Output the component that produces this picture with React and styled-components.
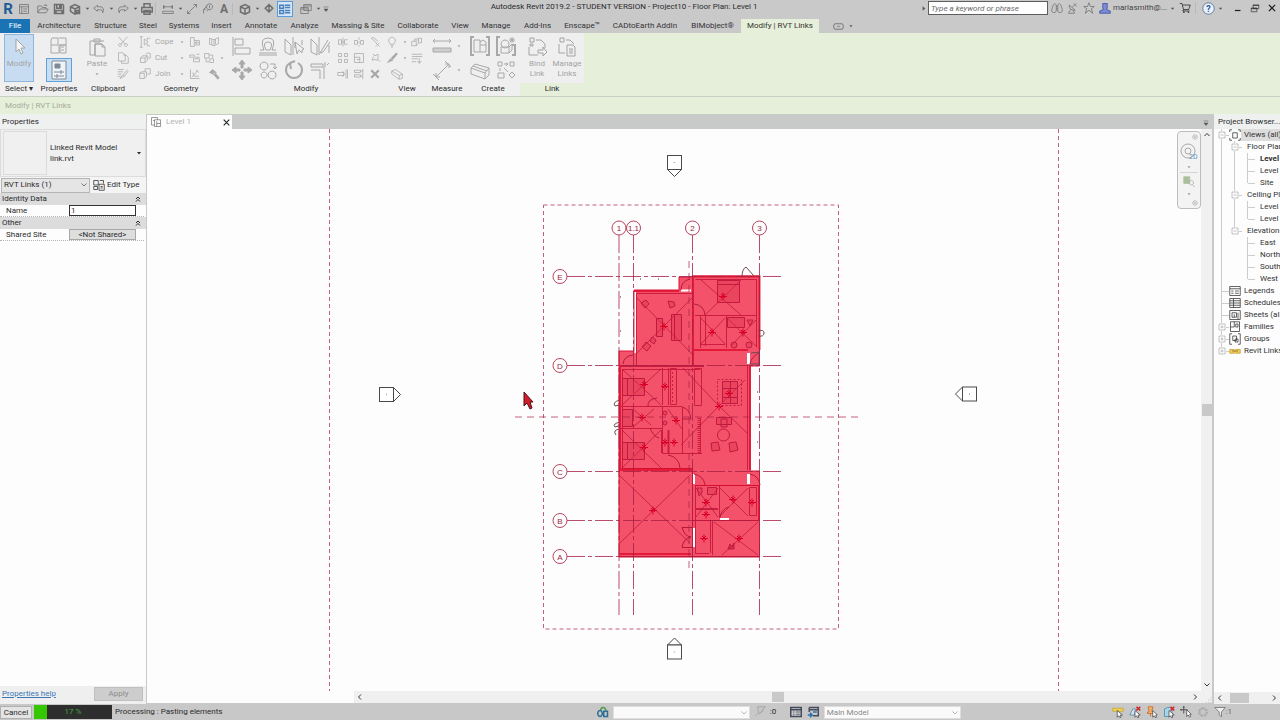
import React from "react";
import styled, { createGlobalStyle, css } from "styled-components";

const GlobalStyle = createGlobalStyle`
  * {
    box-sizing: border-box;
  }
  body {
    margin: 0;
    overflow: hidden;
  }
  body, button, input, select {
    font-family: Roboto, "Open Sans", sans-serif;
    font-size: 8px;
    line-height: 12px;
    color: #2b2b2b;
  }
  button {
    padding: 0;
    border: 0;
    background: none;
  }
  svg {
    display: block;
  }
`;

const WindowStyled = styled.div`
  display: flex;
  flex-direction: column;
  height: 100vh;
  background-color: #c9c9ca;
`;

const IconStyled = styled.svg`
  flex: none;
  width: ${(props) => props.$size}px;
  height: ${(props) => props.$size}px;
  fill: none;
  stroke: currentColor;
  stroke-width: ${(props) => props.$weight || 1};
`;

/* ---------- title bar ---------- */

const TitleBarStyled = styled.header`
  display: flex;
  flex: 0 0 19px;
  align-items: flex-start;
`;

const QuickAccessStyled = styled.div`
  display: flex;
  flex: 0 0 332px;
  align-items: center;
  height: 17px;
`;

const QuickButtonStyled = styled.button`
  display: flex;
  flex: 0 0 16px;
  align-items: center;
  justify-content: center;
  height: 16px;
  color: #6e6e6e;
  ${(props) =>
    props.$active &&
    css`
      background-color: #d4e7fa;
      box-shadow: inset 0 0 0 1px #5a9bd8;
      color: #4a7fb8;
    `}
`;

const LetterStyled = styled.span`
  font-weight: 700;
  font-size: ${(props) => (props.$logo ? 15 : 12)}px;
  line-height: 16px;
  color: ${(props) => (props.$logo ? "#1d5c96" : "#6e6e6e")};
`;

const ArrowButtonStyled = styled.button`
  display: flex;
  flex: 0 0 8px;
  align-items: center;
  justify-content: center;
  height: 12px;
  color: #555;
`;

const SeparatorStyled = styled.span`
  flex: 0 0 ${(props) => props.$width || 5}px;
  height: 12px;
  border-left: 1px solid ${(props) => (props.$blank ? "transparent" : "#b8b8b8")};
`;

const WindowTitleStyled = styled.div`
  flex: 1;
  overflow: hidden;
  line-height: 13px;
  text-align: center;
  white-space: nowrap;
`;

const AccountAreaStyled = styled.div`
  display: flex;
  flex: 0 0 362px;
  align-items: center;
  height: 16px;
`;

const SearchInputStyled = styled.input`
  flex: 0 0 120px;
  height: 14px;
  margin: 0 1px;
  padding: 0 2px;
  border: 1px solid #5d5d5d;
  background-color: #fff;
  font-style: italic;
  &::placeholder {
    color: #6a6a6a;
    opacity: 1;
  }
`;

const UserNameStyled = styled.span`
  flex: 0 0 55px;
  color: #444;
`;

const WindowButtonStyled = styled(QuickButtonStyled)`
  flex-basis: 17px;
  color: #222;
`;

/* ---------- ribbon ---------- */

const TabRowStyled = styled.nav`
  display: flex;
  flex: 0 0 14px;
`;

const RibbonTabStyled = styled.button`
  flex: 0 0 ${(props) => props.$width}px;
  height: 14px;
  white-space: nowrap;
  background-color: ${(props) => {
    switch (props.$kind) {
      case "file":
        return "#1973b5";
      case "active":
        return "#e6efd9";
      default:
        return "transparent";
    }
  }};
  color: ${(props) => (props.$kind === "file" ? "#fff" : "#333")};
`;

const RibbonToggleStyled = styled.button`
  display: flex;
  align-items: center;
  gap: 4px;
  margin-left: 14px;
  color: #555;
`;

const RibbonStyled = styled.div`
  display: flex;
  flex: 0 0 64px;
  background-color: #e6efd9;
  border-bottom: 1px solid #c9cfc2;
`;

const PanelStyled = styled.section`
  display: flex;
  flex: 0 0 ${(props) => props.$width}px;
  flex-direction: column;
  background-color: ${(props) => (props.$green ? "transparent" : "#efefef")};
`;

const PanelBodyStyled = styled.div`
  display: flex;
  flex: 0 0 50px;
  gap: ${(props) => props.$gap || 0}px;
  justify-content: center;
  padding-top: 1px;
  background-color: #efefef;
  color: #a3a3a3;
`;

const PanelLabelStyled = styled.div`
  line-height: 12px;
  text-align: center;
  white-space: nowrap;
`;

const BigButtonStyled = styled.button`
  display: flex;
  flex: 0 0 ${(props) => props.$width || 30}px;
  flex-direction: column;
  align-items: center;
  gap: 2px;
  height: 48px;
  padding-top: 3px;
  line-height: 10px;
  color: #a3a3a3;
  ${(props) =>
    props.$active &&
    css`
      background-color: #c7dcf1;
      box-shadow: inset 0 0 0 1px #8fb6dd;
    `}
`;

const BigGridStyled = styled.div`
  display: grid;
  grid-template-columns: repeat(${(props) => props.$columns}, 26px);
  grid-template-rows: 24px 24px;
`;

const SmallGridStyled = styled.div`
  display: grid;
  grid-template-columns: repeat(${(props) => props.$columns}, ${(props) => props.$cell || 16}px);
  grid-template-rows: repeat(3, 16px);
`;

const ToolStyled = styled.button`
  display: flex;
  align-items: center;
  justify-content: center;
  gap: 4px;
  color: #a8a8a8;
  ${(props) =>
    props.$active &&
    css`
      background-color: #c7dff5;
      box-shadow: inset 0 0 0 1px #62a0d8;
      color: #7e8a96;
    `}
`;

const CommandStyled = styled(ToolStyled)`
  justify-content: flex-start;
`;

const CommandNameStyled = styled.span`
  flex: 0 0 20px;
  text-align: left;
`;

const OptionsBarStyled = styled.div`
  flex: 0 0 17px;
  padding-left: 5px;
  background-color: #e6efd9;
  line-height: 17px;
  color: #a5aa9e;
`;

/* ---------- workspace ---------- */

const WorkspaceStyled = styled.main`
  display: grid;
  flex: 1;
  grid-template-columns: 146px minmax(0, 1fr) 66px;
  min-height: 0;
  background-color: #c8caca;
`;

const PaletteStyled = styled.aside`
  display: flex;
  flex-direction: column;
  min-width: 0;
  overflow: hidden;
  background-color: #fdfdfd;
`;

const PaletteTitleStyled = styled.h2`
  flex: 0 0 15px;
  margin: 0;
  padding: 1px 0 0 ${(props) => props.$inset || 2}px;
  background-color: #eff0f0;
  font-weight: 400;
  font-size: 8px;
  line-height: 14px;
  white-space: nowrap;
`;

const TypeSelectorStyled = styled.button`
  display: flex;
  flex: 0 0 48px;
  align-items: center;
  gap: 3px;
  padding: 0 2px;
  border: 1px solid #dcdcdc;
  background-color: #f0f0f0;
  line-height: 11px;
  text-align: left;
`;

const ThumbnailStyled = styled.span`
  flex: 0 0 44px;
  height: 44px;
  border: 1px solid #dcdcdc;
`;

const TypeNameStyled = styled.span`
  flex: 1;
`;

const FilterRowStyled = styled.div`
  display: flex;
  flex: 0 0 16px;
  align-items: center;
  gap: 3px;
  padding-left: 1px;
  background-color: #f4f4f4;
`;

const ComboStyled = styled.label`
  position: relative;
  flex: 0 0 ${(props) => props.$width}px;
  height: ${(props) => props.$height}px;
  color: #777;
  > svg {
    position: absolute;
    top: 3px;
    right: 2px;
    pointer-events: none;
  }
`;

const SelectStyled = styled.select`
  width: 100%;
  height: 100%;
  padding: 0 2px;
  appearance: none;
  border: 1px solid ${(props) => (props.$plain ? "#dedede" : "#b5b5b5")};
  border-radius: 0;
  background-color: ${(props) => (props.$plain ? "#fafafa" : "#e5e5e5")};
  color: ${(props) => (props.$plain ? "#8a8a8a" : "#2b2b2b")};
`;

const EditTypeStyled = styled.button`
  display: flex;
  align-items: center;
  gap: 2px;
  white-space: nowrap;
`;

const CategoryStyled = styled.div`
  display: flex;
  flex: 0 0 12px;
  align-items: center;
  justify-content: space-between;
  padding: 0 4px 0 2px;
  background-color: #dcdcdd;
`;

const PropertyRowStyled = styled.div`
  display: grid;
  flex: 0 0 12px;
  grid-template-columns: 63px 67px 1fr;
  align-items: center;
  margin-right: 2px;
  padding-left: 6px;
  border-bottom: 1px dotted #b5b5b5;
  line-height: 11px;
`;

const NameInputStyled = styled.input`
  width: 100%;
  height: 11px;
  padding: 0 1px;
  border: 1px solid #333;
  background-color: #fff;
  line-height: 9px;
`;

const SharedButtonStyled = styled.button`
  height: 11px;
  border: 1px solid #a8a8a8;
  background-color: #dedede;
  line-height: 9px;
`;

const PaletteFooterStyled = styled.div`
  display: flex;
  align-items: center;
  justify-content: space-between;
  height: 18px;
  margin-top: auto;
  padding: 0 3px 2px 2px;
  background-color: #efefef;
`;

const HelpLinkStyled = styled.a`
  color: #3a78b5;
`;

const ApplyButtonStyled = styled.button`
  width: 49px;
  height: 14px;
  border: 1px solid #c0c0c0;
  background-color: #cdcdcd;
  color: #8c8c8c;
`;

const DocumentStyled = styled.section`
  display: flex;
  flex-direction: column;
  min-width: 0;
  margin: 0 2px 0 1px;
`;

const DocTabRowStyled = styled.div`
  display: flex;
  flex: 0 0 15px;
  align-items: flex-end;
  justify-content: space-between;
  padding-right: 2px;
`;

const DocTabStyled = styled.div`
  display: flex;
  align-items: center;
  gap: 4px;
  width: 85px;
  height: 14px;
  padding-left: 3px;
  background-color: #fdfdfd;
  color: #7a7a7a;
`;

const DocNameStyled = styled.span`
  flex: 1;
  color: #b2b2b2;
`;

const CloseViewStyled = styled.button`
  display: flex;
  flex: 0 0 12px;
  align-items: center;
  justify-content: center;
  color: #222;
`;

const DocBodyStyled = styled.div`
  display: grid;
  flex: 1;
  grid-template-columns: minmax(0, 1fr) 11px;
  grid-template-rows: minmax(0, 1fr) 12px;
  min-height: 0;
  margin-bottom: 1px;
  background-color: #fdfdfd;
`;

const CanvasStyled = styled.div`
  position: relative;
  min-width: 0;
  min-height: 0;
  > svg {
    width: 100%;
    height: 100%;
  }
`;

const NavBarStyled = styled.div`
  position: absolute;
  top: 2px;
  right: 0;
  display: flex;
  flex-direction: column;
  align-items: center;
  justify-content: space-between;
  width: 24px;
  height: 78px;
  padding: 2px;
  border: 1px solid #bdbdbd;
  border-radius: 4px;
  background-color: #f3f3f3;
  color: #999;
`;

const NavCornerStyled = styled.button`
  display: flex;
  align-self: flex-end;
  color: #aaa;
`;

const NavRuleStyled = styled.span`
  width: 18px;
  height: 1px;
  background-color: #d5d5d5;
`;

const ScrollBarStyled = styled.div`
  display: flex;
  flex: 0 0 12px;
  flex-direction: ${(props) => (props.$vertical ? "column" : "row")};
  align-items: center;
  justify-content: space-between;
  padding: ${(props) => (props.$vertical ? "2px 0" : "0 2px")};
  background-color: #f0f0f0;
  color: #333;
`;

const ScrollThumbStyled = styled.span`
  flex: none;
  width: ${(props) => (props.$vertical ? 10 : props.$length)}px;
  height: ${(props) => (props.$vertical ? props.$length : 10)}px;
  background-color: #c9c9c9;
`;

const HorizontalAreaStyled = styled.div`
  display: flex;
  > div {
    flex: 1;
    margin-left: 207px;
  }
`;

const GripStyled = styled.span`
  display: flex;
  align-items: flex-end;
  justify-content: flex-end;
  background-color: #f0f0f0;
  color: #aaa;
`;

/* ---------- project browser ---------- */

const TreeStyled = styled.ul`
  flex: 1;
  margin: 0;
  padding: 0 0 0 2px;
  list-style: none;
`;

const TreeRowStyled = styled.li`
  display: flex;
  align-items: center;
  height: 12px;
  white-space: nowrap;
  color: #333;
`;

const GuideStyled = styled.span`
  display: flex;
  flex: 0 0 13px;
  align-items: center;
  height: 12px;
  padding-left: 2px;
  background-image: ${(props) =>
    props.$kind === "blank"
      ? "none"
      : props.$kind === "line"
        ? "linear-gradient(#ccc, #ccc)"
        : "linear-gradient(#ccc, #ccc), linear-gradient(#ccc, #ccc)"};
  background-position: 5px 0, 6px 6px;
  background-repeat: no-repeat;
  background-size: 1px ${(props) => (props.$last ? "6px" : "12px")}, 7px 1px;
  > svg {
    background-color: #fdfdfd;
    color: #8a8a8a;
  }
`;

const TreeLabelStyled = styled.span`
  padding: 0 2px 0 ${(props) => (props.$nested ? 5 : 3)}px;
  font-weight: ${(props) => (props.$bold ? 700 : 400)};
  background-color: ${(props) => (props.$selected ? "#dcdcdd" : "transparent")};
`;

/* ---------- status bar ---------- */

const StatusBarStyled = styled.footer`
  display: flex;
  flex: 0 0 16px;
  align-items: center;
  background-color: #c8c8c8;
  white-space: nowrap;
`;

const StatusLeftStyled = styled.div`
  display: flex;
  flex: 0 0 46%;
  align-items: center;
  gap: 2px;
`;

const CancelButtonStyled = styled.button`
  width: 32px;
  height: 13px;
  border: 1px solid #b0b0b0;
  background-color: #e4e4e4;
`;

const ProgressStyled = styled.div`
  position: relative;
  width: 78px;
  height: 14px;
  margin-right: 1px;
  background-color: #2e2e2e;
`;

const ProgressFillStyled = styled.div`
  height: 14px;
  background-color: #35c800;
`;

const ProgressTextStyled = styled.span`
  position: absolute;
  inset: 1px 0 0 0;
  text-align: center;
  color: #3fa83f;
`;

const StatusGroupStyled = styled.div`
  display: flex;
  align-items: center;
  gap: ${(props) => props.$gap}px;
  margin-left: ${(props) => (props.$right ? "auto" : "8px")};
  padding-right: ${(props) => (props.$right ? 48 : 0)}px;
`;

const CountStyled = styled.span`
  flex: 0 0 12px;
`;

const StatusButtonStyled = styled.button`
  display: flex;
  align-items: center;
  color: ${(props) => props.$color || "#666"};
`;

/* Drawn on a 16 unit grid unless a tool asks for another size. */
const ICONS = {
  down: <path d="M4 6h8l-4 5z" fill="currentColor" stroke="none" />,
  right: <path d="M6 3l6 5-6 5z" fill="currentColor" stroke="none" />,
  chevronDown: <path d="M3 5l5 5 5-5" />,
  chevronUp: <path d="M3 10l5-5 5 5" />,
  chevronLeft: <path d="M10 3L5 8l5 5" />,
  chevronRight: <path d="M6 3l5 5-5 5" />,
  customize: <path d="M3 4h10M4 8h8l-4 5z" fill="currentColor" />,
  doubleUp: <path d="M4 8l4-4 4 4M4 13l4-4 4 4" />,
  window: <path d="M2 2h12v12H2zM2 5h12M5 5v9M7 8h5M7 11h5" />,
  open: <path d="M1 13V4h5l1 2h5v2M1 13l3-5h11l-3 5zM9 3h4l-1-1M13 3l-1 1" />,
  save: <path d="M2 2h11l1 1v11H2zM5 2v5h6V2M4 14v-4h8v4M9 3v3" strokeWidth="2" />,
  cloudSave: <path d="M2 5l6-3 6 3v6l-6 4-6-4zM2 5l6 3 6-3M8 8v7M10 10h4v4h-4z" strokeWidth="2" />,
  undo: <path d="M6 3L1 7l5 4V9h4q3 0 3 4 3-8-4-8H6z" />,
  redo: <path d="M10 3l5 4-5 4V9H6q-3 0-3 4-3-8 4-8h3z" />,
  print: <path d="M4 6V1h8v5M4 12H1V6h14v6h-3M4 10h8v5H4zM5 12h6" strokeWidth="2" />,
  measure: <path d="M2 3v5M14 3v5M2 5h12M4 4L2 5l2 2M12 4l2 1-2 2M1 11h14v3H1z" />,
  dimension: <path d="M2 14L14 2M10 2h4v4M2 10v4h4" />,
  tag: <path d="M2 14V9l5-6M2 9l3-1M10 1a4 4 0 1 0 .1 0M10 3v4M6 11l3-3" />,
  cube: <path d="M2 5l6-3 6 3v7l-6 3-6-3zM2 5l6 3 6-3M8 8v7" strokeWidth="2" />,
  section: <path d="M8 2l5 5-5 5-5-5zM8 2v10" strokeWidth="2" />,
  thinLines: <path d="M1 3h5v4H1zM8 3h7M8 6h7M1 10h5v4H1zM8 10h7M8 13h7" strokeWidth="2" />,
  windows: <path d="M5 2h10v8H5zM5 4h10M1 6h10v8H1zM1 8h10" />,
  binoculars: <path d="M3 4l2-2 2 2v8a3 3 0 1 1-6-2zM13 4l-2-2-2 2v8a3 3 0 1 0 6-2zM7 6h2M7 9h2" />,
  satellite: <path d="M3 4q-1 7 8 7zM7 7l5-5M9 2l4 4M5 10l-3 5h8l-2-4" />,
  star: <path d="M8 1l2 5h5l-4 3 2 6-5-4-5 4 2-6-4-3h5z" />,
  user: <path d="M5 2h6v6l-1 2 5 2v3H1v-3l5-2-1-2z" fill="#7b8bd6" stroke="#34489e" />,
  cart: <path d="M1 2h3l2 8h7l2-6H5M6 10l-1 2h9M6 13h1v1H6zM12 13h1v1h-1z" />,
  minimize: <path d="M3 12h9" strokeWidth="2" />,
  restore: <path d="M5 3h9v6H5zM5 4h9M2 8h9v6H2zM2 9h9" />,
  close: <path d="M3 3l10 10M13 3L3 13" strokeWidth="2" />,
  toggle: <path d="M3 4h10q2 0 2 4t-2 4H3q-2 0-2-4t2-4M6 9l2-2 2 2" />,
  cursor: <path d="M7 2v13l3-3 2 5 2-1-2-5h4z" fill="#f5f5f5" />,
  families: <path d="M3 2h6v7H2V4zM10 2h7v7h-6M2 9v8h8V9M10 9h7v8h-6V9M12 11h3M12 14h3" />,
  propertySheet: (
    <>
      <path d="M3 1h14v18H3zM5 12h10M12 10v4M5 16h10M8 14v4" fill="#eef3f8" />
      <path d="M6 4h5v4H6z" fill="currentColor" />
    </>
  ),
  paste: <path d="M3 4h14M3 4v14h5V7h7M7 4V2h6v3H7zM8 7h7l3 3v9H8zM15 7v3h3" />,
  scissors: <path d="M2 1l9 10M14 1L5 11M4 10a2 2 0 1 0 .1 0M12 10a2 2 0 1 0 .1 0" />,
  copy: <path d="M2 1h6l3 3v8H2zM8 4h4l3 3v8H6v-3" />,
  matchBrush: <path d="M1 2h8M1 5h7M1 8h5M1 11h4M14 2L8 9l2 2 5-7M8 9l-4 5 6-3" />,
  cope: <path d="M3 1v14M1 1h4M1 15h4M7 4l5 4-5 4zM15 3h-4v3M15 13h-4v-3" />,
  cutGeo: <path d="M2 8l3-3h6v6l-3 3H2zM2 8h6v6M8 8l3-3M9 3q2-3 6-1v6h-3" />,
  joinGeo: <path d="M1 7l3-2h6v6l-3 3H1zM1 7h6v7M8 5V1h7v7h-4" />,
  wallOpen: <path d="M2 2h5v12H2zM7 6h7v6H7M9 9h5M11 7l-3 2 3 2" />,
  wallSplit: <path d="M1 4h6v3H1zM6 9h8v4H6zM10 3h4M8 7h6" />,
  unjoin: <path d="M2 2v12h12M4 12l8-9M5 6l2 5h6M9 3l4 3" />,
  mesh: <path d="M2 3l6 2v8l-6-2zM8 5l6-3v8l-6 3M5 4v8M10 4v7" />,
  paint: <path d="M2 2h6v6H2zM9 9h5v5H9zM4 8v5h4M8 4h5v4" />,
  hammer: <path d="M2 6l4-4 5 4-3 3zM7 8l6 7 2-2-6-7" fill="currentColor" />,
  align: <path d="M1 1v19M3 3h8v6H3zM3 12h15v6H3z" />,
  offset: <path d="M1 17h18M2 14h4q-5-12 4-12t4 12h4M8 14q-4-8 2-8t2 8zM1 19h18" />,
  mirrorPick: <path d="M1 3v13l6 3V9zM9 1v18M18 4v5M11 6l2 12 2-4 3 3v-3l2-1zM11 6v6" />,
  mirrorDraw: <path d="M1 3v13l6 3V9zM9 1v18M18 4l-8 13 3-1 7-10M19 9v8" />,
  move: <path d="M10 0l3 4h-2v4h-2V4H7zM10 20l3-4h-2v-4h-2v4H7zM0 10l4-3v2h4v2H4v2zM20 10l-4-3v2h-4v2h4v2z" fill="currentColor" />,
  copyTool: <path d="M6 2a4 4 0 1 0 .1 0M14 11a4 4 0 1 0 .1 0M6 12a3 3 0 1 0 .1 0M12 4h5v5M15 7l2 2 2-2" />,
  rotate: <path d="M6 3a8 8 0 1 0 8 0M6 3l5-2M6 3l1 6" strokeWidth="2" />,
  trim: <path d="M1 4h12v3H1zM10 10v9M14 7v12M15 2v5M17 5l2-2M10 10H1" />,
  splitA: <path d="M2 5h4v6H2zM14 5h-4v6h4M8 2v12M6 8h4" />,
  splitB: <path d="M2 6h4v5H2zM10 6h4v5h-4zM8 2v3M8 7v3M8 12v2" />,
  unpin: <path d="M3 3l7 6M3 3l3-1 6 5M9 9l5 5M14 9l-5 5" />,
  array: <path d="M2 2h4v4H2zM10 2h4v4h-4zM2 10h4v4H2zM10 10h4v4h-4z" />,
  scale: <path d="M2 2h12v12H2zM2 7h7v7M5 10h4" />,
  pin: <path d="M5 3l3 2 4-2v7l3 3M4 11l2-5M4 11l4-1 4 1" />,
  extendA: <path d="M1 6h8v4H1zM12 2v12M14 2v12M7 4l3 4-3 4" />,
  extendB: <path d="M2 3h8v3H2zM2 9h8v3H2zM13 1v14M10 4h3M10 11h3" />,
  remove: <path d="M3 3l10 10M13 3L3 13" strokeWidth="3" />,
  bulb: <path d="M6 11q-4-4-2-7 4-5 8 0 2 3-2 7zM6 13h4M7 15h2" />,
  brush: <path d="M14 1L7 8l2 2 6-7zM6 9l-4 5 7-3z" fill="currentColor" />,
  solid: <path d="M1 4l5-2 9 6v6l-4 1-10-7zM1 4l10 6v5M11 10l4-2" />,
  cubes: <path d="M1 7h6v6H1zM7 7l3-3v6l-3 3M8 3h6v6h-3M5 7V4h3" />,
  lineWork: <path d="M1 3h14M1 6h14M1 9h8M1 13h6M11 8v7M9 12l2 3 3-3" />,
  ruler: (
    <>
      <path d="M1 5h18M3 3L1 5l2 2M17 3l2 2-2 2" />
      <path d="M1 12h18v4H1z" fill="#cfcfcf" />
    </>
  ),
  slant: <path d="M4 17L17 4M13 4h4v4M4 13v4h4M1 14l6 6M13 1l6 6" />,
  group: (
    <>
      <path d="M4 1H1v18h3M16 1h3v18h-3" strokeWidth="2" />
      <path d="M4 4h6v12H4zM10 9h6v7h-6M10 6l3-2 3 2v3" />
    </>
  ),
  part: (
    <>
      <path d="M4 1H1v18h3M16 9h3v10h-3" strokeWidth="2" />
      <path d="M5 11h8v6H5zM9 4a4 4 0 1 0 .1 0M13 11l3-3v6l-3 3M16 1v6M13 4h6M14 2l4 4M18 2l-4 4" />
    </>
  ),
  assembly: <path d="M1 8L5 4l14 4v7l-4 4L1 14zM1 8l14 5v6M15 13l4-5M3 6l14 5" />,
  similar: <path d="M2 2h4v4H2zM14 2h4v4h-4zM2 13h6v5H2zM16 12l3 3-3 3-3-3zM8 4h4M4 8v3M8 8l4 4M10 3l2 1-2 2" />,
  bind: <path d="M3 1h4v4H3zM3 7h3v2H3zM2 10v8h9M9 3h5l4 4v4M11 13h5v-3l4 5-4 4v-3h-5z" />,
  manage: <path d="M3 1h4v4H3zM2 7v9h6M9 3h4l4 4M10 8h6l2 2v9h-8zM12 12h4M12 14h4M12 16h4" />,
  editType: <path d="M1 2h6v6H1zM9 2h5v4M1 10h5v4H1zM8 7h7v8H8zM10 10h3M10 12h3" />,
  sheetView: <path d="M2 2h8v3M2 2v10h4M6 5h8v9H6zM9 7v7M9 10h5M4 6h2" />,
  wheel: <path d="M7 1a6 6 0 1 0 .1 0M7 4a3 3 0 1 0 .1 0" />,
  zoomRegion: (
    <>
      <path d="M1 1h8v9H1z" fill="#a9bf9c" stroke="#a9bf9c" />
      <path d="M11 6a3 3 0 1 0 .1 0M13 12l3 3" />
    </>
  ),
  circleX: <path d="M8 2a6 6 0 1 0 .1 0M6 6l4 4M10 6l-4 4" />,
  minusBox: <path d="M2 2h12v12H2zM5 8h6" />,
  plusBox: <path d="M2 2h12v12H2zM5 8h6M8 5v6" />,
  views: <path d="M4 1H1v3M12 1h3v3M4 15H1v-3M12 15h3v-3M5 5h6v7H5z" />,
  legends: <path d="M1 2h14v12H1zM1 5h14M3 8h3M8 8h5M3 11h3M8 11h5" />,
  schedules: <path d="M1 2h14v12H1zM1 5h14M1 8h14M1 11h14M6 2v12" />,
  sheets: <path d="M1 2h14v12H1zM4 5h6v6H4zM12 5v9M7 7v4" />,
  familyTree: <path d="M2 1h12v13H2zM2 8h5M7 1v7M9 4h3v4H9z" />,
  groups: <path d="M4 1H1v14h3M12 1h3v14h-3M5 4h5v6H5zM8 8h4v4H8z" />,
  linkChain: (
    <>
      <path d="M1 6h6v5H1zM9 6h6v5H9z" fill="#f1cf5c" stroke="#c79a20" />
      <path d="M4 8h8" stroke="#8c6d18" />
    </>
  ),
  workset: (
    <>
      <path d="M5 6q0-4 3-4t4 4" stroke="#4f9a4f" strokeWidth="2" />
      <path d="M4 6a3 4 0 1 0 .1 0M9 7v7h5V7z" stroke="#2b6e94" strokeWidth="2" />
    </>
  ),
  editRequests: <path d="M5 1h10l-3 3-3 5-3 1zM2 13l3-3M9 9l4-4" />,
  options: (
    <>
      <path d="M1 2h14v12H1zM1 5h14" strokeWidth="2" />
      <path d="M4 8h2M8 8h5M4 11h2M8 11h5" />
    </>
  ),
  addOption: (
    <>
      <path d="M3 2h12v11H8M3 2v6M3 5h12" strokeWidth="2" />
      <path d="M8 8h5M1 12h6M4 9l3 3-3 3" stroke="#2b6fa8" strokeWidth="2" />
    </>
  ),
  selectLinks: (
    <>
      <path d="M1 3h14v4H1z" fill="#f0d25a" stroke="#c6a22a" />
      <path d="M7 6v9l2-2 2 3 1-1-1-3h3z" fill="#fff" stroke="#444" />
    </>
  ),
  selectUnderlay: (
    <>
      <path d="M1 12l4-8h5l-3 8z" fill="#cfe3ee" stroke="#4a86a8" />
      <path d="M10 1l5 5M15 1l-5 5" stroke="#d02525" strokeWidth="2" />
      <path d="M8 6v9l2-2 2 3 1-1-1-3h3z" fill="#fff" stroke="#444" />
    </>
  ),
  selectPinned: (
    <>
      <path d="M3 1h6v3H8v4h2v2H2V8h2V4H3zM6 10v4" fill="#f3b56a" stroke="#c85f22" />
      <path d="M9 6v9l2-2 2 3 1-1-1-3h2z" fill="#fff" stroke="#444" />
    </>
  ),
  selectFace: (
    <>
      <path d="M2 4l4-2h6v9l-3 3H2z" fill="#a9d4e8" stroke="#3d86ac" />
      <path d="M10 1l5 5M15 1l-5 5" stroke="#d02525" strokeWidth="2" />
      <path d="M8 6v9l2-2 2 3 1-1-1-3h3z" fill="#fff" stroke="#444" />
    </>
  ),
  dragSelect: (
    <>
      <path d="M5 0v10M0 5h10M4 2l1-1 1 1M2 4L1 5l1 1" stroke="#333" />
      <path d="M9 5v9l2-2 2 3 1-1-1-3h2z" fill="#fff" stroke="#444" />
    </>
  ),
  progress: <path d="M8 3a5 5 0 1 0 .1 0" strokeWidth="3" strokeDasharray="3 1" stroke="#aaa" />,
  filter: <path d="M1 2h14l-5 6v6l-3-2V8z" fill="#eee" />,
  grip: <path d="M14 6v1M14 10v1M10 10v1M14 14v1M10 14v1M6 14v1" strokeWidth="2" />,
};

function Icon({ name, size = 12, grid = 16, weight }) {
  return (
    <IconStyled $size={size} $weight={weight} viewBox={`0 0 ${grid} ${grid}`} aria-hidden="true">
      {ICONS[name]}
    </IconStyled>
  );
}

function QuickButton({ icon, label, active, children }) {
  return (
    <QuickButtonStyled $active={active} aria-label={label}>
      {children || <Icon name={icon} size={12} />}
    </QuickButtonStyled>
  );
}

function MenuArrow({ label }) {
  return (
    <ArrowButtonStyled aria-label={label}>
      <Icon name="down" size={7} />
    </ArrowButtonStyled>
  );
}

function TitleBar() {
  return (
    <TitleBarStyled>
      <QuickAccessStyled>
        <QuickButton label="Revit">
          <LetterStyled $logo>R</LetterStyled>
        </QuickButton>
        <QuickButton icon="window" label="Home" />
        <SeparatorStyled $blank $width={3} />
        <QuickButton icon="open" label="Open" />
        <QuickButton icon="save" label="Save" />
        <QuickButton icon="cloudSave" label="Synchronize" />
        <MenuArrow label="Synchronize options" />
        <QuickButton icon="undo" label="Undo" />
        <MenuArrow label="Undo list" />
        <QuickButton icon="redo" label="Redo" />
        <MenuArrow label="Redo list" />
        <QuickButton icon="print" label="Print" />
        <SeparatorStyled />
        <QuickButton icon="measure" label="Measure" />
        <MenuArrow label="Measure options" />
        <QuickButton icon="dimension" label="Aligned dimension" />
        <QuickButton icon="tag" label="Tag by category" />
        <QuickButton label="Text">
          <LetterStyled>A</LetterStyled>
        </QuickButton>
        <SeparatorStyled />
        <QuickButton icon="cube" label="Default 3D view" />
        <MenuArrow label="3D view options" />
        <QuickButton icon="section" label="Section" />
        <QuickButton icon="thinLines" label="Thin lines" active />
        <SeparatorStyled $blank />
        <QuickButton icon="windows" label="Switch windows" />
        <MenuArrow label="Window list" />
        <ArrowButtonStyled aria-label="Customize toolbar">
          <Icon name="customize" size={8} />
        </ArrowButtonStyled>
      </QuickAccessStyled>
      <WindowTitleStyled>
        Autodesk Revit 2019.2 - STUDENT VERSION - Project10 - Floor Plan: Level 1
      </WindowTitleStyled>
      <AccountAreaStyled>
        <SeparatorStyled $blank $width={3} />
        <ArrowButtonStyled aria-label="Collapse search">
          <Icon name="right" size={7} />
        </ArrowButtonStyled>
        <SearchInputStyled aria-label="Search" placeholder="Type a keyword or phrase" />
        <QuickButton icon="binoculars" label="Find" />
        <QuickButton icon="satellite" label="Communication center" />
        <QuickButton icon="star" label="Favorites" />
        <QuickButton icon="user" label="Account" />
        <UserNameStyled>marlasmith@...</UserNameStyled>
        <MenuArrow label="Account options" />
        <WindowButtonStyled aria-label="App store">
          <Icon name="cart" size={12} />
        </WindowButtonStyled>
        <SeparatorStyled $blank $width={2} />
        <SeparatorStyled />
        <QuickButton label="Help">
          <IconStyled $size={13} viewBox="0 0 16 16" aria-hidden="true">
            <circle cx="8" cy="8" r="7" fill="#eaf1f8" stroke="#4d6a92" />
            <text x="8" y="12" fontSize="11" fontWeight="700" textAnchor="middle" fill="#2d55a0" stroke="none">
              ?
            </text>
          </IconStyled>
        </QuickButton>
        <MenuArrow label="Help options" />
        <SeparatorStyled $blank />
        <WindowButtonStyled aria-label="Minimize">
          <Icon name="minimize" size={10} />
        </WindowButtonStyled>
        <WindowButtonStyled aria-label="Restore">
          <Icon name="restore" size={10} />
        </WindowButtonStyled>
        <WindowButtonStyled aria-label="Close">
          <Icon name="close" size={10} />
        </WindowButtonStyled>
      </AccountAreaStyled>
    </TitleBarStyled>
  );
}

const tabs = [
  { name: "File", width: 30, kind: "file" },
  { name: "Architecture", width: 58 },
  { name: "Structure", width: 45 },
  { name: "Steel", width: 30 },
  { name: "Systems", width: 42 },
  { name: "Insert", width: 33 },
  { name: "Annotate", width: 46 },
  { name: "Analyze", width: 41 },
  { name: "Massing & Site", width: 66 },
  { name: "Collaborate", width: 54 },
  { name: "View", width: 30 },
  { name: "Manage", width: 42 },
  { name: "Add-Ins", width: 41 },
  { name: "Enscape™", width: 48 },
  { name: "CADtoEarth AddIn", width: 78 },
  { name: "BIMobject®", width: 57 },
  { name: "Modify | RVT Links", width: 78, kind: "active" },
];

function Tool({ icon, label, big, active, arrow }) {
  return (
    <ToolStyled aria-label={label} $active={active}>
      <Icon name={icon} size={big ? 20 : 12} grid={big ? 20 : 16} />
      {arrow && <Icon name="down" size={6} />}
    </ToolStyled>
  );
}

function Command({ icon, name }) {
  return (
    <CommandStyled>
      <Icon name={icon} size={12} />
      <CommandNameStyled>{name}</CommandNameStyled>
      <Icon name="down" size={6} />
    </CommandStyled>
  );
}

function Panel({ label, width, gap, green, children }) {
  return (
    <PanelStyled $width={width} $green={green}>
      <PanelBodyStyled $gap={gap}>{children}</PanelBodyStyled>
      <PanelLabelStyled>{label}</PanelLabelStyled>
    </PanelStyled>
  );
}

function Ribbon() {
  return (
    <>
      <TabRowStyled>
        {tabs.map((tab) => (
          <RibbonTabStyled key={tab.name} $width={tab.width} $kind={tab.kind}>
            {tab.name}
          </RibbonTabStyled>
        ))}
        <RibbonToggleStyled aria-label="Minimize ribbon">
          <Icon name="toggle" size={11} />
          <Icon name="down" size={6} />
        </RibbonToggleStyled>
      </TabRowStyled>
      <RibbonStyled>
        <Panel label="Select ▾" width={38}>
          <BigButtonStyled $active>
            <Icon name="cursor" size={20} grid={20} />
            Modify
          </BigButtonStyled>
        </Panel>
        <Panel label="Properties" width={42}>
          <BigGridStyled $columns={1}>
            <Tool big icon="families" label="Type properties" />
            <Tool big icon="propertySheet" label="Properties" active />
          </BigGridStyled>
        </Panel>
        <Panel label="Clipboard" width={56} gap={6}>
          <BigButtonStyled $width={24}>
            <Icon name="paste" size={20} grid={20} />
            Paste
            <Icon name="down" size={6} />
          </BigButtonStyled>
          <SmallGridStyled $columns={1}>
            <Tool icon="scissors" label="Cut to clipboard" />
            <Tool icon="copy" label="Copy to clipboard" />
            <Tool icon="matchBrush" label="Match type" />
          </SmallGridStyled>
        </Panel>
        <Panel label="Geometry" width={90}>
          <SmallGridStyled $columns={1} $cell={46}>
            <Command icon="cope" name="Cope" />
            <Command icon="cutGeo" name="Cut" />
            <Command icon="joinGeo" name="Join" />
          </SmallGridStyled>
          <SmallGridStyled $columns={2} $cell={19}>
            <Tool icon="wallOpen" label="Wall opening" />
            <Tool icon="mesh" label="Split face" />
            <Tool icon="wallSplit" label="Beam joins" />
            <Tool icon="paint" label="Paint" arrow />
            <Tool icon="unjoin" label="Wall joins" />
            <Tool icon="hammer" label="Demolish" />
          </SmallGridStyled>
        </Panel>
        <Panel label="Modify" width={160} gap={2}>
          <BigGridStyled $columns={4}>
            <Tool big icon="align" label="Align" />
            <Tool big icon="offset" label="Offset" />
            <Tool big icon="mirrorPick" label="Mirror, pick axis" />
            <Tool big icon="mirrorDraw" label="Mirror, draw axis" />
            <Tool big icon="move" label="Move" />
            <Tool big icon="copyTool" label="Copy" />
            <Tool big icon="rotate" label="Rotate" />
            <Tool big icon="trim" label="Trim or extend to corner" />
          </BigGridStyled>
          <SmallGridStyled $columns={3}>
            <Tool icon="splitA" label="Split element" />
            <Tool icon="splitB" label="Split with gap" />
            <Tool icon="unpin" label="Unpin" />
            <Tool icon="array" label="Array" />
            <Tool icon="scale" label="Scale" />
            <Tool icon="pin" label="Pin" />
            <Tool icon="extendA" label="Extend single element" />
            <Tool icon="extendB" label="Extend multiple elements" />
            <Tool icon="remove" label="Delete" />
          </SmallGridStyled>
        </Panel>
        <Panel label="View" width={42}>
          <SmallGridStyled $columns={2} $cell={20}>
            <Tool icon="bulb" label="Hide in view" arrow />
            <Tool icon="cubes" label="Displace elements" />
            <Tool icon="brush" label="Override graphics" arrow />
            <Tool icon="lineWork" label="Linework" />
            <Tool icon="solid" label="Selection box" />
          </SmallGridStyled>
        </Panel>
        <Panel label="Measure" width={38}>
          <BigGridStyled $columns={1}>
            <Tool big icon="ruler" label="Measure distance" arrow />
            <Tool big icon="slant" label="Aligned dimension" arrow />
          </BigGridStyled>
        </Panel>
        <Panel label="Create" width={54}>
          <BigGridStyled $columns={2}>
            <Tool big icon="group" label="Create group" />
            <Tool big icon="part" label="Create parts" />
            <Tool big icon="assembly" label="Create assembly" />
            <Tool big icon="similar" label="Create similar" />
          </BigGridStyled>
        </Panel>
        <Panel label="Link" width={64} green>
          <BigButtonStyled>
            <Icon name="bind" size={20} grid={20} />
            Bind
            <br />
            Link
          </BigButtonStyled>
          <BigButtonStyled>
            <Icon name="manage" size={20} grid={20} />
            Manage
            <br />
            Links
          </BigButtonStyled>
        </Panel>
      </RibbonStyled>
      <OptionsBarStyled>Modify | RVT Links</OptionsBarStyled>
    </>
  );
}

function PropertiesPalette() {
  return (
    <PaletteStyled>
      <PaletteTitleStyled>Properties</PaletteTitleStyled>
      <TypeSelectorStyled>
        <ThumbnailStyled />
        <TypeNameStyled>
          Linked Revit Model
          <br />
          link.rvt
        </TypeNameStyled>
        <Icon name="down" size={8} />
      </TypeSelectorStyled>
      <FilterRowStyled>
        <ComboStyled $width={89} $height={15}>
          <SelectStyled aria-label="Element filter" defaultValue="links">
            <option value="links">RVT Links (1)</option>
          </SelectStyled>
          <Icon name="chevronDown" size={8} weight={2} />
        </ComboStyled>
        <EditTypeStyled>
          <Icon name="editType" size={12} />
          Edit Type
        </EditTypeStyled>
      </FilterRowStyled>
      <CategoryStyled>
        Identity Data
        <Icon name="doubleUp" size={8} weight={2} />
      </CategoryStyled>
      <PropertyRowStyled>
        <label htmlFor="link-name">Name</label>
        <NameInputStyled id="link-name" defaultValue="1" />
      </PropertyRowStyled>
      <CategoryStyled>
        Other
        <Icon name="doubleUp" size={8} weight={2} />
      </CategoryStyled>
      <PropertyRowStyled>
        <label htmlFor="shared-site">Shared Site</label>
        <SharedButtonStyled id="shared-site">&lt;Not Shared&gt;</SharedButtonStyled>
      </PropertyRowStyled>
      <PaletteFooterStyled>
        <HelpLinkStyled href="#help">Properties help</HelpLinkStyled>
        <ApplyButtonStyled disabled>Apply</ApplyButtonStyled>
      </PaletteFooterStyled>
    </PaletteStyled>
  );
}

const columnsGrid = [
  { x: 619, name: "1" },
  { x: 633.5, name: "1.1" },
  { x: 692.5, name: "2" },
  { x: 759.5, name: "3" },
];

const rowsGrid = [
  { y: 276.5, name: "E" },
  { y: 365.5, name: "D" },
  { y: 471.5, name: "C" },
  { y: 520.5, name: "B" },
  { y: 556.5, name: "A" },
];

const roomMarks = [
  [664, 326], [723, 296], [712, 332], [743, 332], [644, 384], [665, 386],
  [729, 393], [719, 406], [642, 417], [676, 420], [644, 447], [665, 442],
  [674, 442], [653, 510], [706, 502], [706, 514], [733, 499], [752, 502],
  [704, 538], [739, 538],
];

const elevations = [
  { x: 674.5, y: 162.5, turn: 0 },
  { x: 386.5, y: 394.5, turn: -90 },
  { x: 969.5, y: 394, turn: 90 },
  { x: 674.5, y: 652, turn: 180 },
];

function FloorPlan() {
  return (
    <svg viewBox="147 129 1054 562" role="img" aria-label="Level 1 floor plan">
      <g fill="none" stroke="#c4607a" strokeDasharray="4 3">
        <path d="M329.5 129V691M1058.5 129V691" />
        <rect x="543.5" y="205" width="295" height="424" />
      </g>

      <path
        d="M692 276H759.5V366H750V471H759.5V557H619V351H634V290H679V277H692Z"
        fill="#f4526a"
        stroke="#dc1238"
      />
      <path
        d="M634.5 292h1.500v61h-1.500zM681 289.500h10v2h-10zM747 353h3v11h-3zM693 474h2v10h-2zM747 474h3v10h-3zM720 518h9v2h-9zM693 528h2v19h-2z"
        fill="#fff"
      />

      {/* walls */}
      <path
        d="M692 276.500H759.500V350M693 278V366M620 366V470M620 470H693M634 291H679M750 366V470M620 554H691M693 350H748M759 486V520"
        fill="none"
        stroke="#e0102f"
        strokeWidth="2"
        strokeOpacity="0.85"
      />
      <path
        d="M619 556.500H759.500M693 520.500H759M692.500 471V556M695 485.500H759M621.500 468.500H693"
        fill="none"
        stroke="#d5102f"
      />
      <g fill="none" stroke="#cc1d40" strokeWidth="1">
        <path d="M636.500 293.500H692M636.500 294V366M695.500 279.500H756.500V347.500M695 315.500H756M700.500 316V348M705.500 316V346M700 344.500H725M726.500 315V348M622 369.500H700M662.500 368V405M621 406.500H682M621 428.500H662M662.500 407V453.500H702M668.500 368V405M670.500 368.500h6v36h-6zM682.500 407V453M694.500 368.500h7v37h-7zM700.500 418V454M622.500 369V468M747.500 366V470M719.500 486V518M710.500 521V553M712.500 521V555M695.500 486V553M695 553.500H709M749.500 487.500h7v28h-7z" />
        <path d="M662 430V453M668.500 430V453M620 366H704M695 509H718" strokeWidth="2" />
        <path d="M699 418V453" strokeWidth="3" strokeDasharray="1 1" />
        <path d="M672.500 368V405" strokeDasharray="2 2" />
      </g>

      {/* room diagonals */}
      <g fill="none" stroke="#b81236" strokeWidth="1" opacity="0.7">
        <path d="M637 298L693 355M637 353L692 298M701 280L741 315M705 315L741 280M701 344L725 318M701 318L725 344M727 318L756 346M731 346L756 320" />
        <path d="M622 369L661 405M622 405L661 369M683 368L719 406L745 380M681 445L719 406L748 434M633 409L651 425M633 427L654 409M622 430L661 468M622 468L661 430M668 409L682 429" />
        <path d="M620 476L690 543M620 543L690 475M696 488L718 517M696 517L718 488M720 488L748 516M720 516L748 488M714 522L758 555M722 555L758 522" />
      </g>

      {/* furniture */}
      <g fill="#dd2f4e" fillOpacity="0.4" stroke="#c21a3e" strokeWidth="1">
        <path d="M671.500 314.500h10v26h-10zM674.500 315v25M656.500 318.500h6v18h-6zM717.500 280.500h22v22h-22zM717.500 284.500h22M727.500 317.500h17v10h-17zM747 320h6l-3 6z" />
        <path d="M641 303l5-3 3 4-4 4zM668 301l6 1 1 4-5 2zM642 347l5 4 4-5-5-4zM650 341l4 3 2-4-4-3z" />
        <path d="M622.500 378.500h22v17h-22zM627.500 379v16M622.500 442.500h22v17h-22zM627.500 443v16M622.500 409.500h10v17h-10z" />
        <path d="M722.500 381.500h15v22h-15zM722 388.500h15M722 397.500h15M730.500 382v21M716.500 417.500h15v7h-15zM721 419h6v8h-6zM711 443l7-1 2 8-8 1zM729 443l7-1 2 8-8 2zM697 488h5v5l-3 3zM707.500 487.500h9v7h-9z" />
        <circle cx="723.500" cy="435" r="6" fill="none" />
        <circle cx="665" cy="413" r="2" />
        <circle cx="665" cy="423" r="2" />
        <circle cx="734" cy="345" r="3" />
        <circle cx="749" cy="345" r="3" />
        <rect x="717.500" y="379.500" width="24" height="26" fill="none" strokeDasharray="2 2" />
        <path d="M728 549l2-5 2 3 2-4v6z" fill="#b00020" />
      </g>

      {/* doors */}
      <g fill="none" stroke="#b51a3c" strokeWidth="1">
        <path d="M694 304q10 1 11 11M681 290q0-9 9-11M623 364q1-8 10-9M668 455q11 2 12 13M682 407q8 2 9 12h-9M648 407q-1-8 9-9M650 428q3 8 9 10M694 474q10 2 11 11M720 518q1-9 9-11M682 527.500h11M682 547.500h11M682 527q2 9 9 10M682 547q2-9 9-10M750 364q1-7 10-12M750 474q9 2 10 11" />
        <path d="M742 277q0-8 4-10l8 9M758 331q6-2 6 2t-6 3M620 400q-8 2-5 6l4-1M620 422q-8 2-5 5l4-1M620 429q-8 1-4 6M751 353l8-1v12h-9" stroke="#6d4a52" />
      </g>

      <path
        d={roomMarks.map(([x, y]) => `M${x - 4} ${y + 0.5}h8M${x} ${y - 3.5}v8M${x - 2} ${y - 2}l4 4M${x + 2} ${y - 2}l-4 4`).join("")}
        fill="none"
        stroke="#dc0026"
      />

      {/* grids */}
      <g fill="none" stroke="#a82045" strokeOpacity="0.8">
        {columnsGrid.map((line) => (
          <path key={line.name} d={`M${line.x} 235V615`} strokeDasharray="18 3 4 3" />
        ))}
        {rowsGrid.map((line) => (
          <path key={line.name} d={`M567 ${line.y}H784`} strokeDasharray="18 3 4 3" />
        ))}
        <path d="M515 417H861M689 261V570" strokeDasharray="7 5" strokeOpacity="0.7" />
      </g>
      <g
        fill="#9c1f3c"
        fontFamily="Liberation Sans, Arial, sans-serif"
        fontSize="8"
        textAnchor="middle"
      >
        {columnsGrid.map((line) => (
          <g key={line.name}>
            <circle cx={line.x} cy="228" r="7" fill="none" stroke="#b84460" />
            <text x={line.x} y="231">{line.name}</text>
          </g>
        ))}
        {rowsGrid.map((line) => (
          <g key={line.name}>
            <circle cx="560" cy={line.y} r="7" fill="none" stroke="#b84460" />
            <text x="560" y={line.y + 3}>{line.name}</text>
          </g>
        ))}
      </g>

      {elevations.map((mark) => (
        <g
          key={mark.turn}
          transform={`translate(${mark.x} ${mark.y}) rotate(${mark.turn})`}
          fill="#fff"
          stroke="#4a4a4a"
        >
          <path d="M-7 7l7 7 7-7z" />
          <rect x="-7" y="-7" width="14" height="14" />
          <path d="M-1 0h2" stroke="#bbb" />
        </g>
      ))}

      <path d="M640 279h1M658 279h1M620 297h1M620 331h1M757 392h1M757 442h1" stroke="#333" />
      <path d="M524 392v14l3-3 3 6 2-1-2-6h3z" fill="#d31c2b" stroke="#4a1216" strokeWidth="1" />
    </svg>
  );
}

function DocumentView() {
  return (
    <DocumentStyled>
      <DocTabRowStyled>
        <DocTabStyled>
          <Icon name="sheetView" size={12} />
          <DocNameStyled>Level 1</DocNameStyled>
          <CloseViewStyled aria-label="Close view">
            <Icon name="close" size={9} />
          </CloseViewStyled>
        </DocTabStyled>
        <ArrowButtonStyled aria-label="View list">
          <Icon name="customize" size={8} />
        </ArrowButtonStyled>
      </DocTabRowStyled>
      <DocBodyStyled>
        <CanvasStyled>
          <FloorPlan />
          <NavBarStyled>
            <NavCornerStyled aria-label="Close navigation bar">
              <Icon name="circleX" size={6} weight={2} />
            </NavCornerStyled>
            <ToolStyled aria-label="Steering wheel">
              <IconStyled $size={18} viewBox="0 0 18 18" aria-hidden="true">
                <circle cx="8" cy="8" r="7" />
                <circle cx="8" cy="8" r="3" />
                <text x="9" y="16" fontSize="7" fill="#5c8fc0" stroke="none">
                  2D
                </text>
              </IconStyled>
            </ToolStyled>
            <Icon name="down" size={6} />
            <NavRuleStyled />
            <ToolStyled aria-label="Zoom in region">
              <Icon name="zoomRegion" size={12} />
            </ToolStyled>
            <Icon name="down" size={6} />
            <NavCornerStyled aria-label="Navigation bar options">
              <Icon name="circleX" size={6} weight={2} />
            </NavCornerStyled>
          </NavBarStyled>
        </CanvasStyled>
        <ScrollBarStyled $vertical>
          <Icon name="chevronUp" size={8} weight={2} />
          <ScrollThumbStyled $vertical $length={12} />
          <Icon name="chevronDown" size={8} weight={2} />
        </ScrollBarStyled>
        <HorizontalAreaStyled>
          <ScrollBarStyled>
            <Icon name="chevronLeft" size={8} weight={2} />
            <ScrollThumbStyled $length={12} />
            <Icon name="chevronRight" size={8} weight={2} />
          </ScrollBarStyled>
        </HorizontalAreaStyled>
        <GripStyled>
          <Icon name="grip" size={9} />
        </GripStyled>
      </DocBodyStyled>
    </DocumentStyled>
  );
}

const tree = [
  { name: "Views (all)", level: 0, box: "minusBox", icon: "views", selected: true },
  { name: "Floor Plans", level: 1, box: "minusBox" },
  { name: "Level 1", level: 2, bold: true },
  { name: "Level 2", level: 2 },
  { name: "Site", level: 2, last: true },
  { name: "Ceiling Plans", level: 1, box: "minusBox" },
  { name: "Level 1", level: 2 },
  { name: "Level 2", level: 2, last: true },
  { name: "Elevations", level: 1, box: "minusBox", last: true },
  { name: "East", level: 2, closed: true },
  { name: "North", level: 2, closed: true },
  { name: "South", level: 2, closed: true },
  { name: "West", level: 2, closed: true, last: true },
  { name: "Legends", level: 0, icon: "legends" },
  { name: "Schedules/Quantities", level: 0, icon: "schedules" },
  { name: "Sheets (all)", level: 0, icon: "sheets" },
  { name: "Families", level: 0, box: "plusBox", icon: "familyTree" },
  { name: "Groups", level: 0, box: "plusBox", icon: "groups" },
  { name: "Revit Links", level: 0, box: "plusBox", icon: "linkChain", last: true },
];

function TreeRow({ item }) {
  return (
    <TreeRowStyled>
      {item.level > 0 && <GuideStyled $kind="line" />}
      {item.level > 1 && <GuideStyled $kind={item.closed ? "blank" : "line"} />}
      <GuideStyled $kind="branch" $last={item.last}>
        {item.box && <Icon name={item.box} size={8} />}
      </GuideStyled>
      {item.icon && <Icon name={item.icon} size={12} />}
      <TreeLabelStyled $bold={item.bold} $selected={item.selected} $nested={item.level > 0}>
        {item.name}
      </TreeLabelStyled>
    </TreeRowStyled>
  );
}

function ProjectBrowser() {
  return (
    <PaletteStyled>
      <PaletteTitleStyled $inset={4}>Project Browser...</PaletteTitleStyled>
      <TreeStyled>
        {tree.map((item, index) => (
          <TreeRow key={index} item={item} />
        ))}
      </TreeStyled>
      <ScrollBarStyled>
        <Icon name="chevronLeft" size={8} weight={2} />
        <ScrollThumbStyled $length={19} />
        <SeparatorStyled $blank $width={8} />
        <Icon name="chevronRight" size={8} weight={2} />
      </ScrollBarStyled>
    </PaletteStyled>
  );
}

function StatusBar() {
  const percent = 17;

  return (
    <StatusBarStyled>
      <StatusLeftStyled>
        <CancelButtonStyled>Cancel</CancelButtonStyled>
        <ProgressStyled role="progressbar" aria-valuenow={percent} aria-label="Processing">
          <ProgressFillStyled style={{ width: `${percent}%` }} />
          <ProgressTextStyled>{percent} %</ProgressTextStyled>
        </ProgressStyled>
        Processing : Pasting elements
      </StatusLeftStyled>
      <StatusGroupStyled $gap={4}>
        <StatusButtonStyled aria-label="Worksets">
          <Icon name="workset" size={12} />
        </StatusButtonStyled>
        <ComboStyled $width={137} $height={13}>
          <SelectStyled $plain aria-label="Active workset" />
          <Icon name="chevronDown" size={8} />
        </ComboStyled>
        <StatusButtonStyled aria-label="Editing requests" $color="#999">
          <Icon name="editRequests" size={12} />
        </StatusButtonStyled>
        <CountStyled>:0</CountStyled>
      </StatusGroupStyled>
      <StatusGroupStyled $gap={5}>
        <StatusButtonStyled aria-label="Design options" $color="#444b5c">
          <Icon name="options" size={12} />
        </StatusButtonStyled>
        <StatusButtonStyled aria-label="Add to option set" $color="#444b5c">
          <Icon name="addOption" size={12} />
        </StatusButtonStyled>
        <ComboStyled $width={137} $height={13}>
          <SelectStyled $plain aria-label="Active design option" defaultValue="main">
            <option value="main">Main Model</option>
          </SelectStyled>
          <Icon name="chevronDown" size={8} />
        </ComboStyled>
      </StatusGroupStyled>
      <StatusGroupStyled $gap={5} $right>
        <StatusButtonStyled aria-label="Select links">
          <Icon name="selectLinks" size={12} />
        </StatusButtonStyled>
        <StatusButtonStyled aria-label="Select underlay elements">
          <Icon name="selectUnderlay" size={12} />
        </StatusButtonStyled>
        <StatusButtonStyled aria-label="Select pinned elements">
          <Icon name="selectPinned" size={12} />
        </StatusButtonStyled>
        <StatusButtonStyled aria-label="Select elements by face">
          <Icon name="selectFace" size={12} />
        </StatusButtonStyled>
        <StatusButtonStyled aria-label="Drag elements on selection">
          <Icon name="dragSelect" size={12} />
        </StatusButtonStyled>
        <StatusButtonStyled aria-label="Background processes">
          <Icon name="progress" size={12} />
        </StatusButtonStyled>
        <StatusButtonStyled aria-label="Filter">
          <Icon name="filter" size={12} />
          :1
        </StatusButtonStyled>
      </StatusGroupStyled>
    </StatusBarStyled>
  );
}

function App() {
  return (
    <>
      <GlobalStyle />
      <WindowStyled>
        <TitleBar />
        <Ribbon />
        <WorkspaceStyled>
          <PropertiesPalette />
          <DocumentView />
          <ProjectBrowser />
        </WorkspaceStyled>
        <StatusBar />
      </WindowStyled>
    </>
  );
}

export default App;
